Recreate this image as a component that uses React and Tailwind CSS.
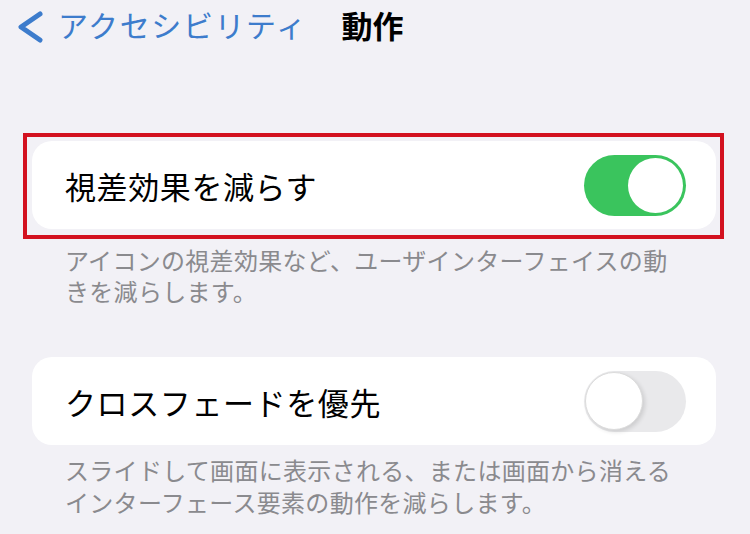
import React from 'react';

const Toggle = ({ on }) => {
  if (on) {
    return (
      <div className="flex h-[61px] w-[102px] shrink-0 items-center justify-end rounded-full bg-[#3ac45d] pr-[3px]">
        <div className="h-[55px] w-[55px] rounded-full bg-white" />
      </div>
    );
  }
  return (
    <div className="flex h-[61px] w-[102px] shrink-0 items-center rounded-full bg-[#e9e9eb] pl-[1px]">
      <div className="h-[58px] w-[58px] rounded-full border border-[#dcdcdc] bg-white shadow-[2px_2px_4px_rgba(0,0,0,0.12)]" />
    </div>
  );
};

const App = () => {
  return (
    <div
      className="h-[534px] w-[750px] overflow-hidden bg-[#f2f1f6]"
      style={{ fontFamily: '"Noto Sans CJK JP", "Noto Sans", sans-serif' }}
    >
      {/* Nav bar */}
      <div className="flex h-[54px] items-center pl-[16px]">
        <svg width="28" height="32" viewBox="0 0 28 32" fill="none" className="shrink-0">
          <path d="M24 3 L5 16 L24 29" stroke="#3d7ccc" strokeWidth={5} strokeLinecap="round" strokeLinejoin="round" />
        </svg>
        <span className="ml-[14px] pb-[6px] text-[30px] leading-none tracking-[1.6px] text-[#3d7ccc]">アクセシビリティ</span>
        <span className="ml-[34px] pb-[6px] text-[31px] font-bold leading-none text-black">動作</span>
      </div>

      {/* Reduce motion (highlighted) */}
      <div className="ml-[23px] mt-[79px] w-[701px] border-4 border-[#d3121f] pb-[6px] pl-[5px] pr-[4px] pt-[4px]">
        <div className="flex h-[88px] w-[684px] items-center justify-between rounded-[20px] bg-white pl-[33px] pr-[30px]">
          <span className="text-[31px] leading-none tracking-[0.6px] text-black">視差効果を減らす</span>
          <Toggle on />
        </div>
      </div>
      <p className="mt-[5px] whitespace-nowrap pl-[65px] text-[24px] leading-[31px] tracking-[0.3px] text-[#8a8a8e]">
        アイコンの視差効果など、ユーザインターフェイスの動
        <br />
        きを減らします。
      </p>

      {/* Prefer cross-fade */}
      <div className="ml-[32px] mt-[51px] flex h-[88px] w-[684px] items-center justify-between rounded-[20px] bg-white pl-[33px] pr-[30px]">
        <span className="text-[31px] leading-none tracking-[0.6px] text-black">クロスフェードを優先</span>
        <Toggle on={false} />
      </div>
      <p className="mt-[9px] whitespace-nowrap pl-[65px] text-[24px] leading-[32px] tracking-[0.3px] text-[#8a8a8e]">
        スライドして画面に表示される、または画面から消える
        <br />
        インターフェース要素の動作を減らします。
      </p>
    </div>
  );
};

export default App;
